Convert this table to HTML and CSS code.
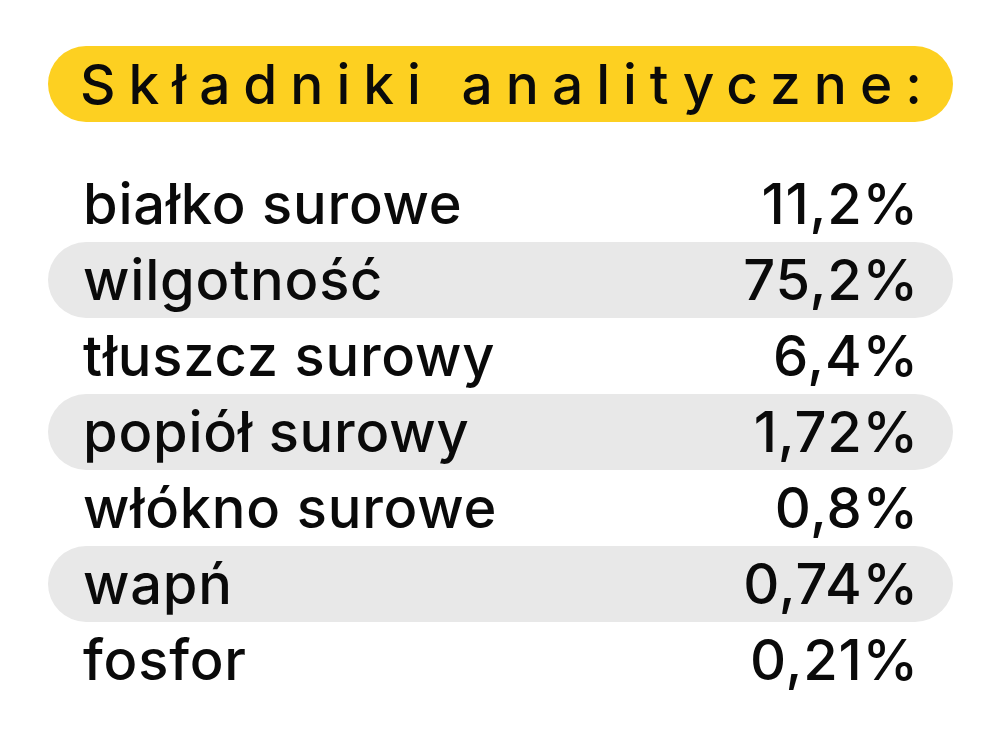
FILE: index.html
```html
<!DOCTYPE html>
<html lang="pl">
<head>
  <meta charset="UTF-8" />
  <meta name="viewport" content="width=device-width, initial-scale=1.0"/>
  <title>Składniki analityczne</title>
  <link rel="stylesheet" href="styles.css">
</head>
<body>

<div class="panel">
  <h1 class="title">Składniki analityczne:</h1>

  <div class="rows">
    <div class="row"><span class="name">białko surowe</span><span class="value">11,2%</span></div>
    <div class="row shaded"><span class="name">wilgotność</span><span class="value">75,2%</span></div>
    <div class="row"><span class="name">tłuszcz surowy</span><span class="value">6,4%</span></div>
    <div class="row shaded"><span class="name">popiół surowy</span><span class="value">1,72%</span></div>
    <div class="row"><span class="name">włókno surowe</span><span class="value">0,8%</span></div>
    <div class="row shaded"><span class="name">wapń</span><span class="value">0,74%</span></div>
    <div class="row"><span class="name">fosfor</span><span class="value">0,21%</span></div>
  </div>
</div>

</body>
</html>
```

FILE: styles.css
```css
  body {
    margin: 0;
    background: #fff;
    font-family: Inter, "Noto Sans", sans-serif;
    color: #0a0a0a;
  }
  .panel {
    padding: 46px 47px 0 48px;
  }
  .title {
    margin: 0;
    height: 76px;
    display: flex;
    align-items: center;
    padding-left: 32px;
    background-color: #fdd021;
    border-radius: 38px;
    font-size: 55px;
    font-weight: 500;
    letter-spacing: 13px;
  }
  .rows {
    margin-top: 44px;
  }
  .row {
    height: 76px;
    display: flex;
    justify-content: space-between;
    align-items: center;
    padding: 0 34px 0 35px;
    border-radius: 38px;
    font-size: 56px;
    font-weight: 500;
    letter-spacing: 0.8px;
  }
  .shaded {
    background-color: #e8e8e8;
  }
```
